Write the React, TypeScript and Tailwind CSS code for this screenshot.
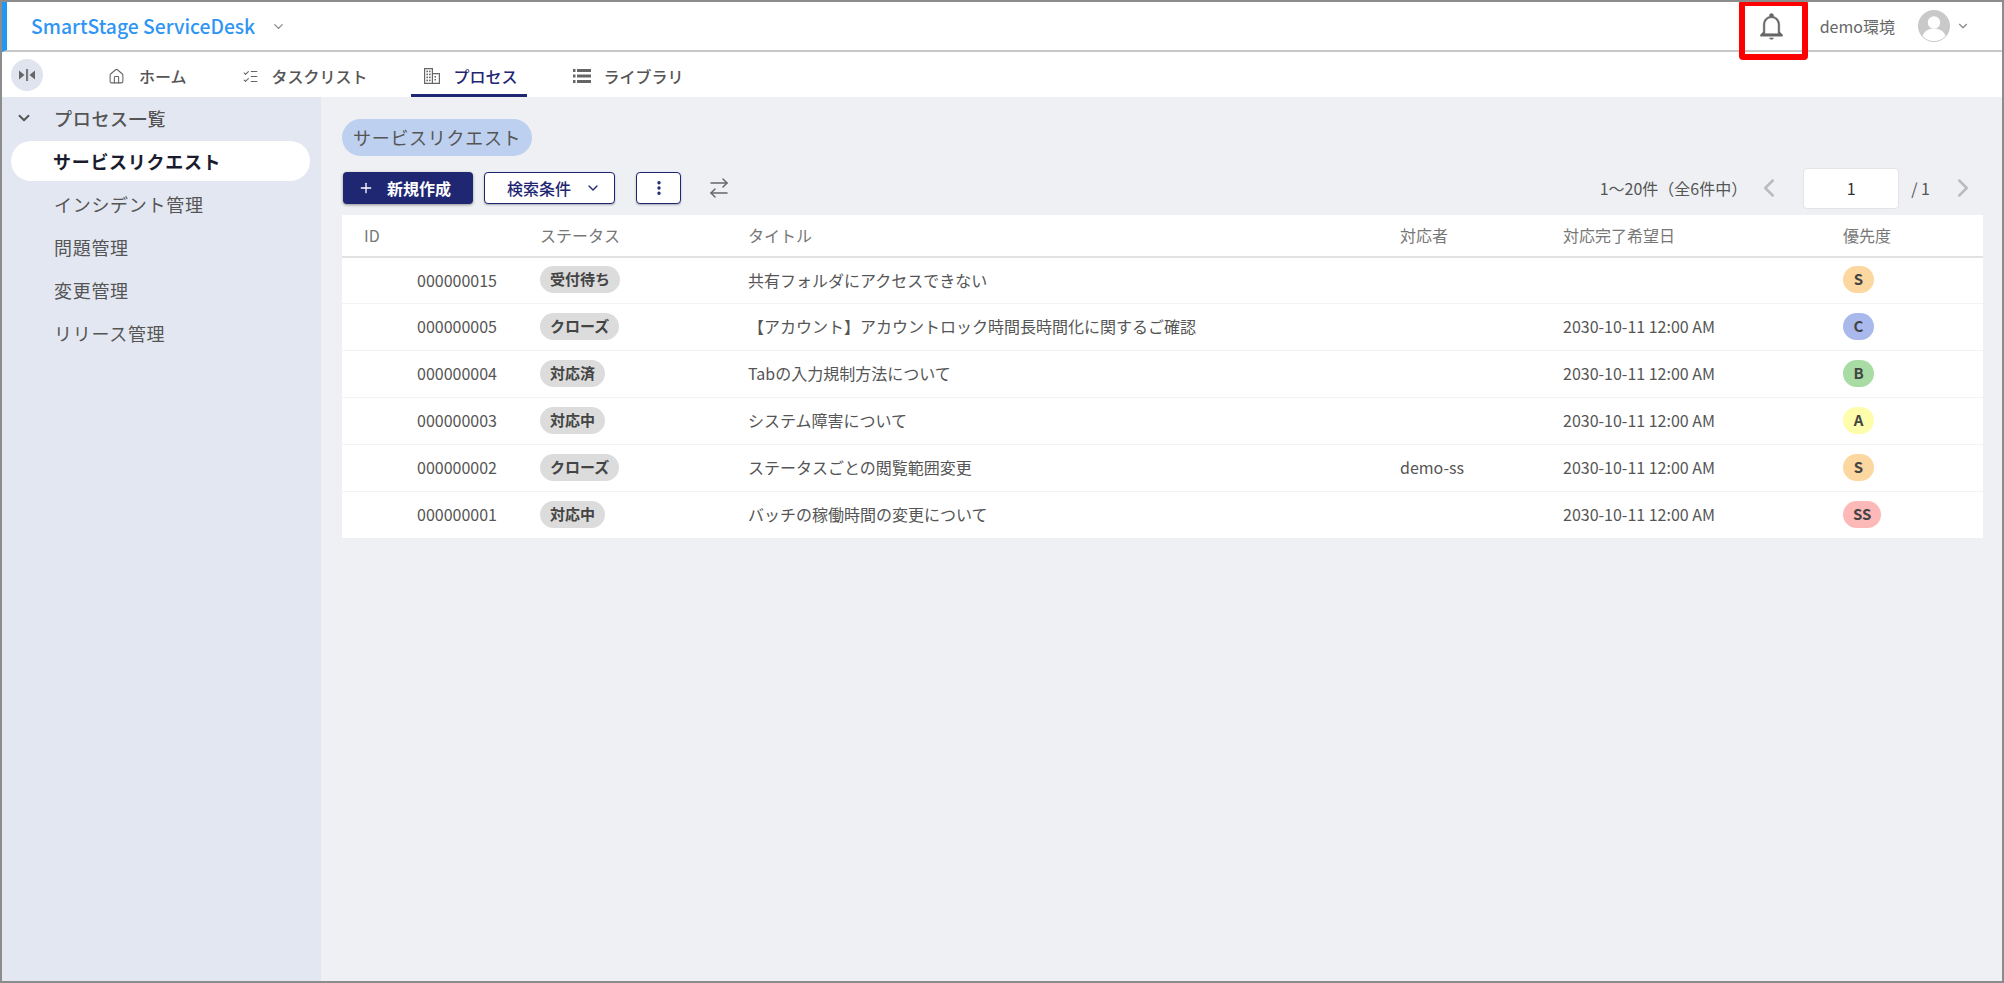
import React from "react";
import { ChevronDown, ChevronLeft, ChevronRight, Plus, EllipsisVertical, ArrowRightLeft, House, ListChecks } from "lucide-react";

const rows = [
  { id: "000000015", status: "受付待ち", title: "共有フォルダにアクセスできない", who: "", date: "", pri: "S", cls: "bg-[#fdd7a0]" },
  { id: "000000005", status: "クローズ", title: "【アカウント】アカウントロック時間長時間化に関するご確認", who: "", date: "2030-10-11 12:00 AM", pri: "C", cls: "bg-[#a9b9ec]" },
  { id: "000000004", status: "対応済", title: "Tabの入力規制方法について", who: "", date: "2030-10-11 12:00 AM", pri: "B", cls: "bg-[#a8dca4]" },
  { id: "000000003", status: "対応中", title: "システム障害について", who: "", date: "2030-10-11 12:00 AM", pri: "A", cls: "bg-[#fdfdab]" },
  { id: "000000002", status: "クローズ", title: "ステータスごとの閲覧範囲変更", who: "demo-ss", date: "2030-10-11 12:00 AM", pri: "S", cls: "bg-[#fdd7a0]" },
  { id: "000000001", status: "対応中", title: "バッチの稼働時間の変更について", who: "", date: "2030-10-11 12:00 AM", pri: "SS", cls: "bg-[#fdb8b8]" },
];

const grid = "grid grid-cols-[198px_208px_652px_163px_280px_1fr] items-center";

function BellIcon() {
  return (
    <svg width="33" height="33" viewBox="0 0 24 24" fill="#666" stroke="#666" strokeWidth="0.35" className="ml-auto">
      <path d="M12 21.300c.8 0 1.400-.4 1.400-1h-2.800c0 .6.600 1 1.400 1zm6-5.300v-5c0-3.070-1.630-5.640-4.500-6.320V4c0-.83-.67-1.500-1.500-1.500s-1.500.67-1.500 1.500v.68C7.640 5.360 6 7.920 6 11v5l-2 2v1h16v-1l-2-2zm-1.200 1.200H7.200V11c0-2.900 1.900-5.300 4.800-5.300s4.800 2.400 4.800 5.300v6.200z" />
    </svg>
  );
}

function Building() {
  return (
    <svg width="18" height="18" viewBox="0 0 18 18" fill="#666">
      <path d="M1 1h9v16H1zM2.200 2.200v13.600h6.600V2.200z" />
      <rect x="3.400" y="3.600" width="1.600" height="1.600" /><rect x="6" y="3.600" width="1.600" height="1.600" />
      <rect x="3.400" y="6.600" width="1.600" height="1.600" /><rect x="6" y="6.600" width="1.600" height="1.600" />
      <rect x="3.400" y="9.600" width="1.600" height="1.600" /><rect x="6" y="9.600" width="1.600" height="1.600" />
      <rect x="3.400" y="12.600" width="1.600" height="1.600" /><rect x="6" y="12.600" width="1.600" height="1.600" />
      <path d="M10 6h7v11h-7v-1.200h5.800V7.200H10z" />
      <rect x="11.500" y="9" width="1.500" height="1.500" /><rect x="11.500" y="12" width="1.500" height="1.500" />
    </svg>
  );
}

function Library() {
  return (
    <svg width="18" height="16" viewBox="0 0 18 16" fill="#666">
      <rect x="0" y="1" width="2.500" height="3" /><rect x="4" y="1" width="14" height="3" />
      <rect x="0" y="6.500" width="2.500" height="3" /><rect x="4" y="6.500" width="14" height="3" />
      <rect x="0" y="12" width="2.500" height="3" /><rect x="4" y="12" width="14" height="3" />
    </svg>
  );
}

function Collapse() {
  return (
    <svg width="16" height="12" viewBox="0 0 16 12" fill="#666">
      <path d="M0 1.500 5.500 6 0 10.500zM16 1.500 10.500 6l5.500 4.500z" />
      <rect x="7" y="0" width="0.900" height="12" /><rect x="8.200" y="0" width="0.900" height="12" />
    </svg>
  );
}

function Avatar() {
  return (
    <svg width="32" height="32" viewBox="0 0 32 32">
      <circle cx="16" cy="16" r="16" fill="#c9c9c9" />
      <circle cx="16" cy="12.500" r="6.200" fill="#fff" />
      <path d="M4.500 26c2-5.500 6.500-7.500 11.500-7.500S25.500 20.500 27.500 26C24.500 29.500 20.500 31 16 31S7.500 29.500 4.500 26z" fill="#fff" />
    </svg>
  );
}

export default function App() {
  return (
    <div className="relative flex h-[983px] w-[2004px] flex-col overflow-hidden border-2 border-[#8c8c8c] bg-white font-['Noto_Sans_CJK_JP','Noto_Sans',sans-serif] text-[#555]">
      <header className="flex h-[50px] shrink-0 items-center border-b-2 border-[#c8c8c8] border-l-[5px] border-l-[#2196f3] pl-6 pr-[32px]">
        <span className="text-[19.3px] font-medium text-[#2e95f5]">SmartStage ServiceDesk</span>
        <ChevronDown className="ml-[16px] text-[#888]" size={15} />
        <BellIcon />
        <span className="ml-[32px] text-[16px] text-[#666]">demo環境</span>
        <span className="ml-[23px]"><Avatar /></span>
        <ChevronDown className="ml-[6px] text-[#888]" size={14} />
      </header>

      <nav className="flex h-[45px] shrink-0 items-center text-[16px] font-medium">
        <div className="ml-[9px] flex h-8 w-8 items-center justify-center rounded-full bg-[#dfe4ef]"><Collapse /></div>
        <div className="ml-[65px] flex items-center gap-[14px] pt-[3px]"><House size={17} className="text-[#666]" strokeWidth={1.5} /><span>ホーム</span></div>
        <div className="ml-[55px] flex items-center gap-[13px] pt-[3px]"><ListChecks size={17} className="text-[#666]" strokeWidth={1.5} /><span>タスクリスト</span></div>
        <div className="relative ml-[43px] flex h-full items-center gap-[13px] pl-3 pr-[9px] pt-[3px] text-[#1f2773]">
          <Building /><span>プロセス</span>
          <span className="absolute inset-x-0 bottom-0 h-[3px] bg-[#1f2773]" />
        </div>
        <div className="ml-[46px] flex items-center gap-[13px] pt-[3px]"><Library /><span>ライブラリ</span></div>
      </nav>

      <div className="flex min-h-0 flex-1">
        <aside className="w-[319px] shrink-0 bg-[#e3e7f2] text-[18px]">
          <div className="flex h-[44px] items-center pb-[2px] pl-[13px] font-medium">
            <ChevronDown size={18} strokeWidth={2.5} />
            <span className="ml-[21px] tracking-[0.7px]">プロセス一覧</span>
          </div>
          <div className="ml-[9px] flex h-[40px] w-[299px] items-center rounded-full bg-white pl-[42px] font-bold tracking-[0.7px] text-[#1b1b2e]">サービスリクエスト</div>
          <div className="pt-[2px]">
            {["インシデント管理", "問題管理", "変更管理", "リリース管理"].map((t) => (
              <div key={t} className="flex h-[43px] items-center pl-[52px] tracking-[0.7px]">{t}</div>
            ))}
          </div>
        </aside>

        <main className="min-w-0 flex-1 bg-[#eef0f4] pl-[21px] pr-[19px] pt-[22px]">
          <div className="inline-flex h-[37px] items-center rounded-full bg-[#bdd0f0] px-[11px] text-[18px] tracking-[0.7px]">サービスリクエスト</div>
          <div className="relative ml-px mt-4 flex h-[32px] items-center">
            <button className="flex h-[32px] w-[130px] items-center rounded bg-[#1f2773] pl-[15px] text-[16px] font-bold text-white shadow-[0_1px_3px_rgba(0,0,0,0.4)]">
              <Plus size={16} strokeWidth={2} /><span className="ml-[13px]">新規作成</span>
            </button>
            <button className="ml-[11px] flex h-[32px] w-[131px] items-center rounded border border-[#1f2773] bg-white pl-[22px] text-[16px] font-medium text-[#1f2773] shadow-[0_1px_2px_rgba(0,0,0,0.3)]">
              検索条件<ChevronDown className="ml-[14px]" size={16} />
            </button>
            <button className="ml-[21px] flex h-[32px] w-[45px] items-center justify-center rounded border border-[#1f2773] bg-white text-[#1f2773] shadow-[0_1px_2px_rgba(0,0,0,0.3)]">
              <EllipsisVertical size={18} strokeWidth={2.5} />
            </button>
            <ArrowRightLeft className="ml-[26px] text-[#666]" size={24} strokeWidth={1.5} />
            <div className="ml-auto flex items-center text-[16px]">
              <span>1〜20件（全6件中）</span>
              <ChevronLeft className="ml-[7px] text-[#bbb]" size={30} />
              <div className="ml-[19px] flex h-[41px] w-[96px] items-center justify-center rounded border border-[#e4e4e4] bg-white text-[#333]">1</div>
              <span className="ml-[12px]">/ 1</span>
              <ChevronRight className="ml-[18px] mr-[5px] text-[#bbb]" size={30} />
            </div>
          </div>

          <div className="mt-[11px] bg-white text-[16px]">
            <div className={`${grid} h-[43px] border-b-2 border-[#e2e2e2] pb-[2px] text-[#777]`}>
              <div className="pl-[22px]">ID</div>
              <div>ステータス</div>
              <div>タイトル</div>
              <div>対応者</div>
              <div>対応完了希望日</div>
              <div>優先度</div>
            </div>
            {rows.map((r, i) => (
              <div key={r.id} className={`${grid} pb-[2px] ${i === 0 || i === rows.length - 1 ? "h-[46px]" : "h-[47px]"} ${i < rows.length - 1 ? "border-b border-[#f3f3f3]" : ""}`}>
                <div className="pl-[75px]">{r.id}</div>
                <div><span className="inline-flex h-[27px] items-center rounded-full bg-[#dcdcdc] px-[10px] text-[15px] font-bold text-[#444]">{r.status}</span></div>
                <div>{r.title}</div>
                <div>{r.who}</div>
                <div>{r.date}</div>
                <div><span className={`inline-flex h-[27px] min-w-[31px] items-center justify-center rounded-full px-[10px] text-[15px] font-bold text-[#444] ${r.cls}`}>{r.pri}</span></div>
              </div>
            ))}
          </div>
        </main>
      </div>

      <div className="absolute left-[1737px] top-[-2px] h-[60px] w-[69px] rounded-[4px] border-[6px] border-[#ff0000]" />
    </div>
  );
}
